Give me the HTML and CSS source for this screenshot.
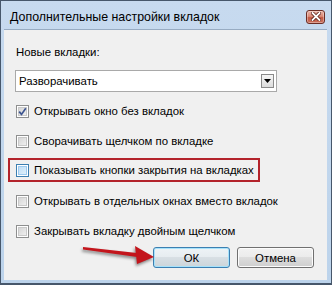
FILE: index.html
```html
<!DOCTYPE html>
<html lang="ru">
<head>
  <meta charset="UTF-8" />
  <title>Дополнительные настройки вкладок</title>
  <link rel="stylesheet" href="styles.css">
</head>
<body>
  <div class="window">

    <!-- Title bar -->
    <div class="titlebar">
      <span class="title">Дополнительные настройки вкладок</span>
      <span class="close">
        <svg width="10" height="9" viewBox="0 0 10 9">
          <path d="M1.5 1 L8.5 8 M8.5 1 L1.5 8" stroke="#5a1f18" stroke-width="3.4" stroke-linecap="square"/>
          <path d="M1.5 1 L8.5 8 M8.5 1 L1.5 8" stroke="#ffffff" stroke-width="1.8" stroke-linecap="square"/>
        </svg>
      </span>
    </div>

    <!-- Dialog body -->
    <div class="client">
      <div class="label">Новые вкладки:</div>

      <div class="select">
        <span class="select-value">Разворачивать</span>
        <span class="select-btn">
          <svg width="7" height="4" viewBox="0 0 7 4"><path d="M0 0 H7 L3.5 4 Z" fill="#000"/></svg>
        </span>
      </div>

      <div class="options">
        <label class="option">
          <span class="box checked">
            <svg width="9" height="9" viewBox="0 0 9 9"><path d="M1.2 4.6 L3.5 7.4 L7.8 1.2" fill="none" stroke="#3d5590" stroke-width="1.7"/></svg>
          </span>
          Открывать окно без вкладок
        </label>
        <label class="option">
          <span class="box"></span>
          Сворачивать щелчком по вкладке
        </label>
        <label class="option highlight">
          <span class="box hover"></span>
          Показывать кнопки закрытия на вкладках
        </label>
        <label class="option">
          <span class="box"></span>
          Открывать в отдельных окнах вместо вкладок
        </label>
        <label class="option">
          <span class="box"></span>
          Закрывать вкладку двойным щелчком
        </label>
      </div>

      <div class="actions">
        <button class="btn btn-default">ОК</button>
        <button class="btn">Отмена</button>
      </div>
    </div>
  </div>

  <!-- Annotation arrow -->
  <svg class="arrow" width="100" height="35" viewBox="0 0 100 35">
    <path d="M13 9 L67 15 L67 19 L13 11.5 Z" fill="#c3151c"/>
    <path d="M65 8 L84 19 L67 26 Z" fill="#c3151c"/>
  </svg>
</body>
</html>
```

FILE: styles.css
```css
* {
  box-sizing: border-box;
}

html, body {
  margin: 0;
}

body {
  position: relative;
  width: 333px;
  height: 285px;
  background: #ffffff;
  font-family: 'Liberation Sans', Arial, sans-serif;
  font-size: 11.4px;
  color: #000;
  white-space: nowrap;
}

.window {
  width: 332px;
  height: 285px;
  display: flex;
  flex-direction: column;
  border: 1px solid #47576b;
  border-bottom-width: 2px;
  padding: 0 4px 3px 3px;
  background: linear-gradient(#c7daef, #bcd3eb);
}

/* Title bar */
.titlebar {
  height: 28px;
  display: flex;
  align-items: center;
  justify-content: space-between;
  padding: 3px 2px 0 6px;
  font-size: 12.4px;
}

.close {
  width: 19px;
  height: 14px;
  display: flex;
  align-items: center;
  justify-content: center;
  border: 1px solid #6b2d25;
  border-radius: 3px;
  background: linear-gradient(#eab1a3 0%, #d98a78 45%, #c45a45 55%, #c9705c 100%);
  box-shadow: inset 0 0 0 1px rgba(255, 255, 255, 0.35);
}

/* Client area */
.client {
  flex: 1;
  background: #f0f0f0;
  border-top: 1px solid #97abc2;
  padding: 14px 13px 0 12px;
}

.label {
  line-height: 16px;
}

.select {
  margin: 10px 0 0 -1px;
  width: 262px;
  height: 22px;
  display: flex;
  align-items: center;
  justify-content: space-between;
  background: #fff;
  border: 1px solid #a9a9a9;
  padding: 0 2px 0 3px;
}

.select-btn {
  width: 13px;
  height: 14px;
  display: flex;
  align-items: center;
  justify-content: center;
  border: 1px solid #8a8a8a;
  background: linear-gradient(#f6f6f6, #dcdcdc);
}

.options {
  margin-top: 4px;
}

.option {
  height: 30px;
  display: flex;
  align-items: center;
}

.option.highlight {
  height: 24px;
  width: 252px;
  margin: 2px 0 4px -8px;
  border: 2px solid #b3232b;
  padding-left: 6px;
}

.box {
  width: 13px;
  height: 13px;
  margin-right: 5px;
  flex-shrink: 0;
  display: flex;
  align-items: center;
  justify-content: center;
  border: 1px solid #8e8f8f;
  background: #f4f4f4;
  box-shadow: inset 0 0 0 1px #fff, inset 0 0 0 2px #c9c9c9;
  background-image: linear-gradient(135deg, #cfcfcf, #f6f6f6);
}

.box.hover {
  border-color: #3c7fb1;
  background-image: linear-gradient(135deg, #b8d9f3, #e6f4fd);
  box-shadow: inset 0 0 0 1px #fff, inset 0 0 0 2px #9ccaf0;
}

/* Buttons */
.actions {
  margin-top: 1px;
  display: flex;
  justify-content: flex-end;
  gap: 7px;
}

.btn {
  width: 77px;
  height: 21px;
  padding: 0;
  font-family: inherit;
  font-size: 11.4px;
  font-weight: normal;
  color: #000;
  border: 1px solid #707070;
  border-radius: 3px;
  background: linear-gradient(#f2f2f2 0%, #ebebeb 50%, #dddddd 50%, #cfcfcf 100%);
  box-shadow: inset 0 0 0 1px #fcfcfc;
}

.btn-default {
  border-color: #3c7fb1;
  box-shadow: inset 0 0 0 1px #a6e2fb;
  background: linear-gradient(#eef3f6 0%, #e6ecf0 50%, #d8dfe4 50%, #ccd5da 100%);
}

/* Annotation */
.arrow {
  position: absolute;
  left: 70px;
  top: 238px;
  filter: drop-shadow(-1px 2px 1.5px rgba(0, 0, 0, 0.45));
}
```
